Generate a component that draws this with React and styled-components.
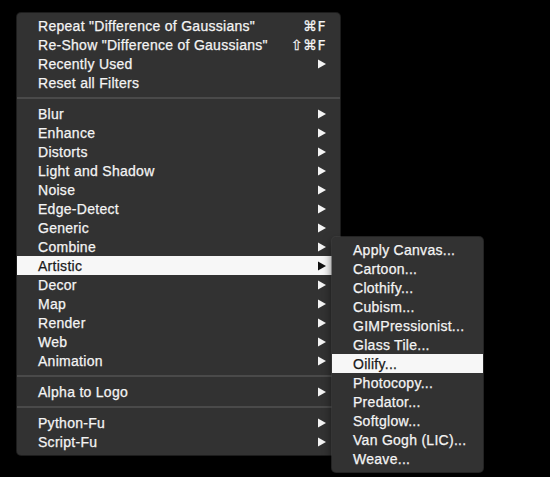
import React from 'react';
import styled, { createGlobalStyle, css } from 'styled-components';

const GlobalStyle = createGlobalStyle`
  html, body {
    margin: 0;
    padding: 0;
    background: #000;
  }
  body {
    font-family: "Liberation Sans", Arial, "DejaVu Sans", sans-serif;
    -webkit-font-smoothing: antialiased;
  }
`;

const groups = [
  [
    { label: 'Repeat "Difference of Gaussians"', shortcut: '⌘F' },
    { label: 'Re-Show "Difference of Gaussians"', shortcut: '⇧⌘F' },
    { label: 'Recently Used', sub: true },
    { label: 'Reset all Filters' },
  ],
  [
    { label: 'Blur', sub: true },
    { label: 'Enhance', sub: true },
    { label: 'Distorts', sub: true },
    { label: 'Light and Shadow', sub: true },
    { label: 'Noise', sub: true },
    { label: 'Edge-Detect', sub: true },
    { label: 'Generic', sub: true },
    { label: 'Combine', sub: true },
    { label: 'Artistic', sub: true, active: true },
    { label: 'Decor', sub: true },
    { label: 'Map', sub: true },
    { label: 'Render', sub: true },
    { label: 'Web', sub: true },
    { label: 'Animation', sub: true },
  ],
  [{ label: 'Alpha to Logo', sub: true }],
  [
    { label: 'Python-Fu', sub: true },
    { label: 'Script-Fu', sub: true },
  ],
];

const artistic = [
  'Apply Canvas...',
  'Cartoon...',
  'Clothify...',
  'Cubism...',
  'GIMPressionist...',
  'Glass Tile...',
  'Oilify...',
  'Photocopy...',
  'Predator...',
  'Softglow...',
  'Van Gogh (LIC)...',
  'Weave...',
];

const Page = styled.div`
  padding: 13px 0 0 17px;
  height: 464px;
`;

const MenuWrap = styled.div`
  position: relative;
  width: 323px;
`;

const Menu = styled.div`
  width: ${p => p.width}px;
  background: #323232;
  border-radius: 4px;
  padding: 3px 0 4px;
  box-sizing: border-box;
  box-shadow: 0 0 0 1px rgba(80, 80, 80, 0.35);
`;

const SubMenu = styled(Menu)`
  position: absolute;
  left: 315px;
  top: 224px;
  box-shadow: 0 0 0 1px rgba(70, 70, 70, 0.5), 0 4px 10px rgba(0, 0, 0, 0.6);
`;

const Row = styled.div`
  display: flex;
  align-items: center;
  height: 19px;
  padding: 0 14px 0 21px;
  font-size: 14px;
  color: #f4f4f4;
  white-space: nowrap;
  -webkit-text-stroke: 0.25px currentColor;
  ${p => p.active && css`
    background: #f7f7f7;
    color: #1a1a1a;
  `}
`;

const Label = styled.span`
  flex: 1;
  letter-spacing: 0.28px;
`;

const Shortcut = styled.span`
  font-size: 14px;
  font-family: "DejaVu Sans", "Liberation Sans", sans-serif;
  letter-spacing: 0.5px;
`;

const Separator = styled.div`
  height: 2px;
  margin: 5px 0;
  background: #4a4a4a;
`;

const Arrow = ({ color }) => (
  <svg width="8" height="10" viewBox="0 0 8 10">
    <polygon points="0,0.5 8,5 0,9.5" fill={color} />
  </svg>
);

export default function App() {
  return (
    <Page>
      <GlobalStyle />
      <MenuWrap>
        <Menu width={323}>
          {groups.map((group, gi) => (
            <React.Fragment key={gi}>
              {gi > 0 && <Separator />}
              {group.map(item => (
                <Row key={item.label} active={item.active}>
                  <Label>{item.label}</Label>
                  {item.shortcut && <Shortcut>{item.shortcut}</Shortcut>}
                  {item.sub && <Arrow color={item.active ? '#111' : '#f4f4f4'} />}
                </Row>
              ))}
            </React.Fragment>
          ))}
        </Menu>
        <SubMenu width={151}>
          {artistic.map(label => (
            <Row key={label} active={label === 'Oilify...'}>
              <Label>{label}</Label>
            </Row>
          ))}
        </SubMenu>
      </MenuWrap>
    </Page>
  );
}
